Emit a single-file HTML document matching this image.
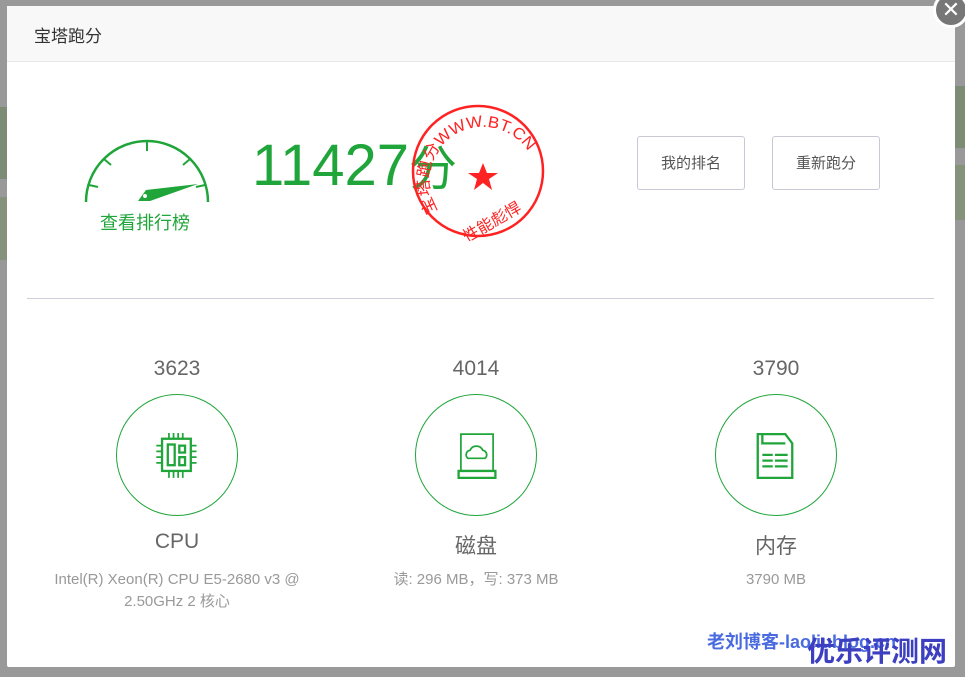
<!DOCTYPE html>
<html><head><meta charset="utf-8"><style>
*{margin:0;padding:0;box-sizing:border-box}
body{width:965px;height:677px;overflow:hidden;background:#999;font-family:"Liberation Sans","Noto Sans CJK SC",sans-serif;position:relative}
.a{position:absolute}
.modal{left:7px;top:6px;width:948px;height:661px;background:#fff;border-radius:2px}
.hdr{left:0;top:0;width:948px;height:56px;background:#f8f8f8;border-bottom:1px solid #e8e8e8}
.btn{border:1px solid #c9c9d6;border-radius:3px;width:108px;height:54px;font-size:15px;color:#555;text-align:center;line-height:54px}
.num{font-size:21px;color:#666;text-align:center;width:200px}
.circ{width:122px;height:122px;border:1px solid #20a53a;border-radius:50%}
.lbl{font-size:21px;color:#666;text-align:center;width:300px}
.sub{font-size:15px;color:#999;text-align:center;width:300px;line-height:22px}
</style></head><body>
<div class="a" style="left:0;top:107px;width:7px;height:72px;background:#7d8c74"></div>
<div class="a" style="left:0;top:197px;width:7px;height:63px;background:#85937c"></div>
<div class="a" style="left:955px;top:86px;width:10px;height:62px;background:#7d8c74"></div>
<div class="a" style="left:955px;top:165px;width:10px;height:55px;background:#85937c"></div>
<div class="a modal">
 <div class="a hdr"><div class="a" style="left:27px;top:16px;font-size:17px;color:#333">宝塔跑分</div></div>
 <svg class="a" style="left:75px;top:114px" width="130" height="84" viewBox="0 0 130 84">
  <path d="M4 82 A61 61 0 0 1 126 82" fill="none" stroke="#20a53a" stroke-width="2.5"/>
  <g stroke="#20a53a" stroke-width="2">
   <line x1="65" y1="22" x2="65" y2="31"/><line x1="22" y1="39" x2="29" y2="45"/><line x1="108" y1="39" x2="101" y2="45"/>
   <line x1="7" y1="65" x2="16" y2="67"/><line x1="123" y1="65" x2="114" y2="67"/></g>
  <path d="M56 81 L64 70 L116 64 L68 81 Z" fill="#20a53a"/>
  <circle cx="63" cy="76" r="2" fill="#fff"/>
 </svg>
 <div class="a" style="left:93px;top:203px;font-size:18px;color:#20a53a">查看排行榜</div>
 <div class="a" style="left:245px;top:126px;font-size:58px;color:#20a53a;line-height:68px">11427<span style="font-size:48px">分</span></div>
 <svg class="a" style="left:401px;top:95px" width="140" height="140" viewBox="0 0 140 140">
  <defs><path id="arc" d="M30 110 A54 54 0 1 1 120 50"/></defs>
  <circle cx="70" cy="70" r="65" fill="none" stroke="#f22" stroke-width="2.5"/>
  <text font-size="16" fill="#f22" font-family="Liberation Sans,Noto Sans CJK SC"><textPath href="#arc" textLength="170" lengthAdjust="spacingAndGlyphs">宝塔跑分WWW.BT.CN</textPath></text>
  <text x="50" y="128" font-size="16" fill="#f22" font-family="Noto Sans CJK SC" transform="rotate(-30 80 118)">性能彪悍</text>
  <polygon points="75,62 79,72 90,72 81,78 84,89 75,82 66,89 69,78 60,72 71,72" fill="#f22"/>
 </svg>
 <div class="a btn" style="left:630px;top:130px">我的排名</div>
 <div class="a btn" style="left:765px;top:130px">重新跑分</div>
 <div class="a" style="left:20px;top:292px;width:907px;height:1px;background:#cfcfdc"></div>

 <div class="a num" style="left:70px;top:351px">3623</div>
 <div class="a num" style="left:369px;top:351px">4014</div>
 <div class="a num" style="left:669px;top:351px">3790</div>
 <div class="a circ" style="left:109px;top:388px"></div>
 <div class="a circ" style="left:408px;top:388px"></div>
 <div class="a circ" style="left:708px;top:388px"></div>
 <svg class="a" style="left:147px;top:427px" width="46" height="46" viewBox="0 0 36 40" fill="none" stroke="#20a53a" stroke-width="2">
  <rect x="5" y="5" width="25" height="28"/><rect x="10" y="10" width="6" height="18"/><rect x="20" y="11" width="5" height="6"/><rect x="20" y="21" width="5" height="7"/>
  <path d="M11 0v5M15 0v5M19 0v5M23 0v5M11 33v6M15 33v6M19 33v6M23 33v6M0 11h5M0 16h5M0 21h5M0 26h5M30 11h5M30 16h5M30 21h5M30 26h5" stroke-width="1.5"/>
 </svg>
 <svg class="a" style="left:449px;top:427px" width="42" height="46" viewBox="0 0 34 40" fill="none" stroke="#20a53a" stroke-width="2">
  <path d="M3 1h28v32H3z" stroke-width="1.5"/><path d="M1 33h32v6H1z" stroke-width="2"/>
  <path d="M9 22a4 4 0 0 1 2-7 6 6 0 0 1 11 0 4 4 0 0 1 2 7z" stroke-width="1.5"/>
 </svg>
 <svg class="a" style="left:748px;top:427px" width="40" height="46" viewBox="0 0 32 40" fill="none" stroke="#20a53a" stroke-width="2">
  <path d="M1 1h24l6 8v30H1z"/><path d="M5 1v8h20"/>
  <path d="M5 19h22M5 24h22M5 29h22" stroke-width="2"/><path d="M15 17v14" stroke="#fff" stroke-width="2"/>
 </svg>
 <div class="a lbl" style="left:20px;top:524px">CPU</div>
 <div class="a lbl" style="left:319px;top:524px">磁盘</div>
 <div class="a lbl" style="left:619px;top:524px">内存</div>
 <div class="a sub" style="left:20px;top:563px">Intel(R) Xeon(R) CPU E5-2680 v3 @<br>2.50GHz 2 核心</div>
 <div class="a sub" style="left:319px;top:563px">读: 296 MB，写: 373 MB</div>
 <div class="a sub" style="left:619px;top:563px">3790 MB</div>
 <div class="a" style="left:700px;top:622px;font-size:18px;color:#4a6be0;font-weight:bold">老刘博客-laoliublog.cn</div>
 <div class="a" style="left:800px;top:630px;font-size:28px;color:#3b3fc0;font-weight:bold;line-height:32px">优乐评测网</div>
</div>
<div class="a" style="left:933px;top:-8px;width:36px;height:36px;border-radius:50%;background:#777;border:3px solid #fff;color:#fff;font-size:22px;text-align:center;line-height:30px">✕</div>
</body></html>
